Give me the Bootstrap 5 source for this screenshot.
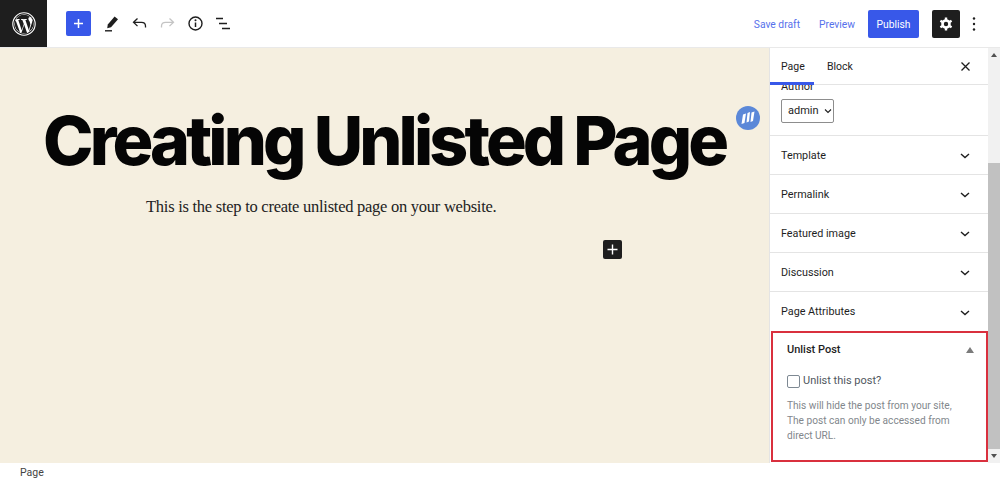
<!DOCTYPE html>
<html lang="en">

<head>
    <meta charset="UTF-8" />
    <meta name="viewport" content="width=device-width, initial-scale=1.0" />
    <title>Creating Unlisted Page</title>
    <link href="https://cdn.jsdelivr.net/npm/bootstrap@5.3.2/dist/css/bootstrap.min.css" rel="stylesheet" />
    <style>
        html, body { height: 481px; overflow: hidden; }
        body { font-family: Roboto, sans-serif; font-size: 11px; color: #1e1e1e; background: #fff; }
        svg { display: block; }

        .top-bar { height: 48px; border-bottom: 1px solid #e9e9e9; }
        .wp-logo { width: 47px; height: 47px; background: #1e1e1e; }
        .tool-list { padding-left: 19px; gap: 11px; }
        .add-btn { width: 25px; height: 25px; background: #3858e9; border-radius: 2px; margin-right: 1px; }
        .tool-slot { width: 17px; }
        .link-action { color: #3858e9; opacity: .85; font-size: 10.3px; padding-top: 2px; }
        .link-preview { margin-left: 19px; }
        .publish-btn { width: 51px; height: 28px; padding-top: 2px; background: #3858e9; color: #fff; font-size: 10.3px; border-radius: 2px; margin-left: 13px; }
        .gear-btn { width: 28px; height: 28px; background: #1e1e1e; border-radius: 2px; margin-left: 13px; }
        .more-btn { width: 8px; margin-left: 10px; margin-right: 22px; }

        .work-area { height: 415px; }
        .editor-pane { width: 769px; background: #f5efe0; position: relative; }
        .page-title { font-family: Inter, sans-serif; font-weight: 800; font-size: 68px; line-height: 80px; letter-spacing: -3.87px; color: #050505; margin: 52px 0 0 43px; white-space: nowrap; }
        .page-text { font-family: "Liberation Serif", serif; font-size: 16.5px; line-height: 24px; letter-spacing: -.26px; color: #222; margin: 15px 0 0 146px; }
        .grammar-badge { position: absolute; left: 736px; top: 58px; width: 24px; height: 24px; border-radius: 50%; background: #5b88d8; }
        .block-add { position: absolute; left: 603px; top: 192px; width: 19px; height: 19px; background: #1e1e1e; border-radius: 2px; }

        .side-pane { width: 219px; border-left: 1px solid #e4e4e4; overflow: hidden; }
        .tab-head { height: 37px; padding-left: 11px; border-bottom: 1px solid #e4e4e4; }
        .tab-item { font-size: 10.5px; color: #1e1e1e; height: 37px; line-height: 38px; }
        .tab-page { width: 44px; margin-left: -11px; padding-left: 11px; box-shadow: inset 0 -3px 0 #3858e9; }
        .tab-block { margin-left: 13px; }
        .tab-close { margin-right: 17px; }
        .author-panel { height: 51px; padding-left: 11px; border-bottom: 1px solid #e4e4e4; }
        .author-label { font-size: 11px; line-height: 11px; height: 6px; overflow: hidden; }
        .author-label span { display: block; margin-top: -4px; }
        .author-select { width: 53px; height: 24px; margin-top: 8px; border: 1px solid #8d8d8d; border-radius: 2px; padding-left: 6px; font-size: 11px; gap: 5px; }
        .panel-row { height: 39px; padding: 2px 18px 0 11px; border-bottom: 1px solid #e4e4e4; font-size: 10.8px; }
        .panel-row.row-last { border-bottom: 0; }
        .unlist-box { height: 131px; margin-left: 1px; width: 217px; border: 2px solid #d9303e; padding: 7px 14px 0; }
        .unlist-head { font-size: 11px; font-weight: 500; height: 20px; }
        .unlist-arrow { width: 0; height: 0; border-left: 4px solid transparent; border-right: 4px solid transparent; border-bottom: 6px solid #7b7b7b; margin-right: -2px; }
        .unlist-check { margin-top: 13px; gap: 3px; font-size: 11px; color: #50575e; }
        .check-box { width: 13px; height: 13px; border: 1px solid #7e8993; border-radius: 2px; background: #fff; }
        .unlist-help { margin: 8px 14px 0 0; font-size: 10.15px; line-height: 15.3px; color: #82878c; }

        .scroll-track { width: 12px; background: #f1f1f1; }
        .scroll-btn { height: 14px; }
        .arrow-up { width: 0; height: 0; border-left: 3.5px solid transparent; border-right: 3.5px solid transparent; border-bottom: 4px solid #505050; }
        .arrow-down { width: 0; height: 0; border-left: 3.5px solid transparent; border-right: 3.5px solid transparent; border-top: 4px solid #505050; }
        .scroll-thumb { height: 287px; margin-top: 101px; background: #c1c1c1; }
        .status-bar { height: 18px; padding-left: 20px; font-size: 10.5px; color: #444; line-height: 19px; }
    </style>
</head>

<body>
    <!-- Top bar -->
    <div class="top-bar d-flex align-items-center">
        <div class="wp-logo d-flex align-items-center justify-content-center">
            <svg width="24" height="24" viewBox="0 0 24 24">
                <circle cx="12" cy="12" r="11.2" fill="none" stroke="#fff" stroke-width="1.1" />
                <circle cx="12" cy="12" r="9.7" fill="#fff" />
                <path fill="#1e1e1e" d="M2.8 12c0 3.6 2.1 6.800 5.200 8.300L3.600 8.300A9.200 9.200 0 0 0 2.800 12Zm15.300-.5c0-1.100-.4-1.900-.8-2.500-.5-.8-.9-1.500-.9-2.300 0-.9.700-1.700 1.600-1.700h.1A9.200 9.200 0 0 0 4.200 7.200h.6c1 0 2.500-.1 2.500-.1.500 0 .6.700.1.800l-1.100.1 3.400 10.200 2.100-6.200-1.500-4-1-.1c-.5 0-.4-.8.100-.8 0 0 1.500.1 2.500.1s2.500-.1 2.500-.1c.5 0 .6.700.1.800l-1.100.1 3.400 10.100.9-3.100c.4-1.300.7-2.200.7-2.900Zm-5.900 1.300-2.800 8.200a9.300 9.300 0 0 0 5.700-.1l-.1-.1-2.800-8Zm8.100-5.300.1.900c0 .900-.2 1.900-.7 3.200l-2.800 8.200A9.200 9.200 0 0 0 20.300 7.500Z" />
            </svg>
        </div>
        <div class="tool-list d-flex align-items-center">
            <div class="add-btn d-flex align-items-center justify-content-center">
                <svg width="13" height="13" viewBox="0 0 13 13"><path d="M6.500 2v9M2 6.500h9" stroke="#fff" stroke-width="1.500" /></svg>
            </div>
            <div class="tool-slot">
                <svg width="17" height="17" viewBox="0 0 17 17"><path fill="#1e1e1e" d="M11.600 1.500 15 4.200 8 12.300l-3.800 1 .6-3.900Z" /><path d="M2 15.800h7" stroke="#1e1e1e" stroke-width="1.400" /></svg>
            </div>
            <div class="tool-slot">
                <svg width="17" height="17" viewBox="0 0 17 17"><path fill="none" stroke="#1e1e1e" stroke-width="1.300" d="M6.500 3.500 2.500 7.300l4 3.800M2.500 7.300h8c2.500 0 4 1.500 4 3.700v1.500" /></svg>
            </div>
            <div class="tool-slot">
                <svg width="17" height="17" viewBox="0 0 17 17"><path fill="none" stroke="#c4c4c4" stroke-width="1.300" d="M10.500 3.500l4 3.800-4 3.800M14.500 7.300h-8c-2.500 0-4 1.500-4 3.700v1.500" /></svg>
            </div>
            <div class="tool-slot">
                <svg width="17" height="17" viewBox="0 0 17 17"><circle cx="8.500" cy="8.500" r="6.500" fill="none" stroke="#1e1e1e" stroke-width="1.400" /><path d="M8.500 7.500v4.500" stroke="#1e1e1e" stroke-width="1.500" /><circle cx="8.500" cy="5.200" r="1" fill="#1e1e1e" /></svg>
            </div>
            <div class="tool-slot">
                <svg width="17" height="17" viewBox="0 0 17 17"><path d="M1 3.500h7M4 8.500h8M7 13.500h8" stroke="#1e1e1e" stroke-width="1.500" /></svg>
            </div>
        </div>
        <div class="ms-auto d-flex align-items-center">
            <span class="link-action">Save draft</span>
            <span class="link-action link-preview">Preview</span>
            <div class="publish-btn d-flex align-items-center justify-content-center">Publish</div>
            <div class="gear-btn d-flex align-items-center justify-content-center">
                <svg width="16" height="16" viewBox="0 0 16 16"><circle cx="8" cy="8" r="3.500" fill="none" stroke="#fff" stroke-width="2.600" /><path d="M8 1.500v3M8 11.500v3M2.400 4.750l2.600 1.500M11 9.750l2.600 1.500M13.600 4.750 11 6.250M5 9.750l-2.600 1.500" stroke="#fff" stroke-width="2.400" /></svg>
            </div>
            <div class="more-btn d-flex justify-content-center">
                <svg width="4" height="16" viewBox="0 0 4 16"><circle cx="2" cy="2.500" r="1.200" fill="#1e1e1e" /><circle cx="2" cy="8" r="1.200" fill="#1e1e1e" /><circle cx="2" cy="13.500" r="1.200" fill="#1e1e1e" /></svg>
            </div>
        </div>
    </div>

    <div class="work-area d-flex">
        <!-- Editor canvas -->
        <div class="editor-pane">
            <h1 class="page-title">Creating Unlisted Page</h1>
            <p class="page-text">This is the step to create unlisted page on your website.</p>
            <div class="grammar-badge d-flex align-items-center justify-content-center">
                <svg width="16" height="14" viewBox="0 0 16 14"><path fill="#fff" d="M3 3.500 6 2.500 4.500 12 1.500 13ZM7.500 2 10 1 9 10.500 6.500 11.500ZM11.500 1.500 14.500.5 13 10 10.500 11Z" /></svg>
            </div>
            <div class="block-add d-flex align-items-center justify-content-center">
                <svg width="13" height="13" viewBox="0 0 13 13"><path d="M6.500 1.500v10M1.500 6.500h10" stroke="#fff" stroke-width="1.400" /></svg>
            </div>
        </div>

        <!-- Settings sidebar -->
        <div class="side-pane">
            <div class="tab-head d-flex align-items-center">
                <div class="tab-item tab-page">Page</div>
                <div class="tab-item tab-block">Block</div>
                <div class="ms-auto tab-close">
                    <svg width="11" height="11" viewBox="0 0 11 11"><path d="M1.500 1.500l8 8M9.500 1.500l-8 8" stroke="#1e1e1e" stroke-width="1.300" /></svg>
                </div>
            </div>
            <div class="author-panel">
                <div class="author-label"><span>Author</span></div>
                <div class="author-select d-flex align-items-center">admin
                    <svg width="8" height="6" viewBox="0 0 8 6"><path d="M1 1.500l3 3 3-3" fill="none" stroke="#1e1e1e" stroke-width="1.100" /></svg>
                </div>
            </div>
            <div class="panel-row d-flex align-items-center justify-content-between">Template
                <svg width="10" height="6" viewBox="0 0 10 6"><path d="M1 1l4 3.500L9 1" fill="none" stroke="#1e1e1e" stroke-width="1.400" /></svg>
            </div>
            <div class="panel-row d-flex align-items-center justify-content-between">Permalink
                <svg width="10" height="6" viewBox="0 0 10 6"><path d="M1 1l4 3.500L9 1" fill="none" stroke="#1e1e1e" stroke-width="1.400" /></svg>
            </div>
            <div class="panel-row d-flex align-items-center justify-content-between">Featured image
                <svg width="10" height="6" viewBox="0 0 10 6"><path d="M1 1l4 3.500L9 1" fill="none" stroke="#1e1e1e" stroke-width="1.400" /></svg>
            </div>
            <div class="panel-row d-flex align-items-center justify-content-between">Discussion
                <svg width="10" height="6" viewBox="0 0 10 6"><path d="M1 1l4 3.500L9 1" fill="none" stroke="#1e1e1e" stroke-width="1.400" /></svg>
            </div>
            <div class="panel-row row-last d-flex align-items-center justify-content-between">Page Attributes
                <svg width="10" height="6" viewBox="0 0 10 6"><path d="M1 1l4 3.500L9 1" fill="none" stroke="#1e1e1e" stroke-width="1.400" /></svg>
            </div>
            <div class="unlist-box">
                <div class="unlist-head d-flex align-items-center justify-content-between">Unlist Post
                    <span class="unlist-arrow"></span>
                </div>
                <div class="unlist-check d-flex align-items-center">
                    <span class="check-box"></span>
                    <span>Unlist this post?</span>
                </div>
                <p class="unlist-help">This will hide the post from your site, The post can only be accessed from direct URL.</p>
            </div>
        </div>

        <!-- Scrollbar -->
        <div class="scroll-track d-flex flex-column">
            <div class="scroll-btn d-flex align-items-center justify-content-center"><span class="arrow-up"></span></div>
            <div class="scroll-thumb"></div>
            <div class="scroll-btn mt-auto d-flex align-items-center justify-content-center"><span class="arrow-down"></span></div>
        </div>
    </div>

    <div class="status-bar">Page</div>

    <script src="https://cdn.jsdelivr.net/npm/bootstrap@5.3.2/dist/js/bootstrap.bundle.min.js"></script>
</body>

</html>
